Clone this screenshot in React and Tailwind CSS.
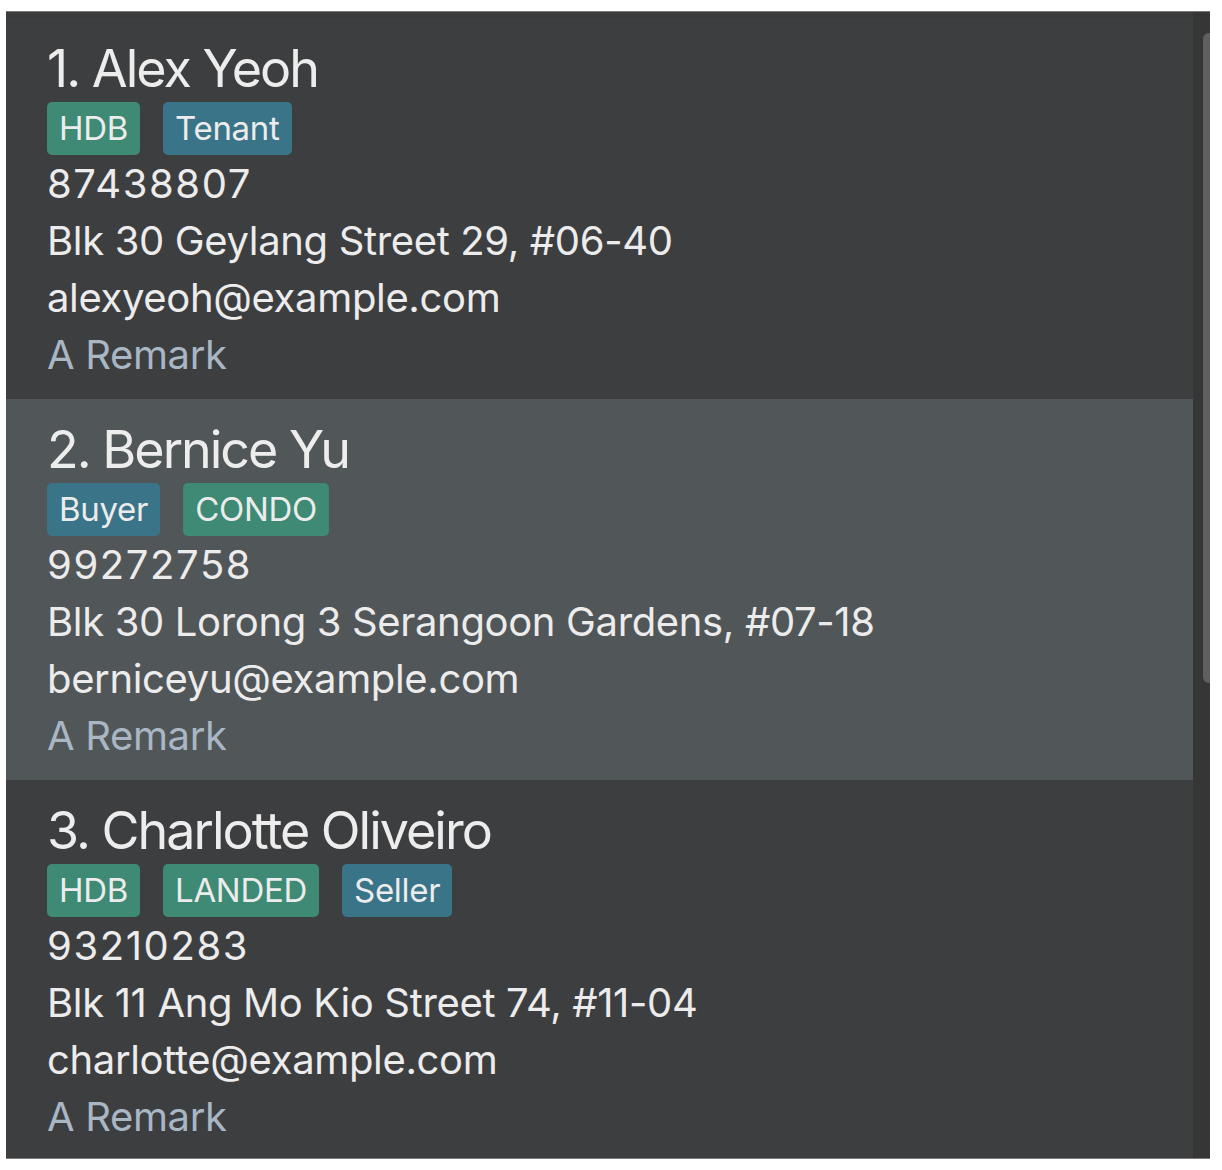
// Person list panel - dark theme

const persons = [
  {
    id: 1,
    name: 'Alex Yeoh',
    tags: [
      { label: 'HDB', kind: 'property' },
      { label: 'Tenant', kind: 'role' },
    ],
    phone: '87438807',
    address: 'Blk 30 Geylang Street 29, #06-40',
    email: 'alexyeoh@example.com',
    remark: 'A Remark',
  },
  {
    id: 2,
    name: 'Bernice Yu',
    tags: [
      { label: 'Buyer', kind: 'role' },
      { label: 'CONDO', kind: 'property' },
    ],
    phone: '99272758',
    address: 'Blk 30 Lorong 3 Serangoon Gardens, #07-18',
    email: 'berniceyu@example.com',
    remark: 'A Remark',
    selected: true,
  },
  {
    id: 3,
    name: 'Charlotte Oliveiro',
    tags: [
      { label: 'HDB', kind: 'property' },
      { label: 'LANDED', kind: 'property' },
      { label: 'Seller', kind: 'role' },
    ],
    phone: '93210283',
    address: 'Blk 11 Ang Mo Kio Street 74, #11-04',
    email: 'charlotte@example.com',
    remark: 'A Remark',
  },
];

function Tag({ label, kind }) {
  return (
    <span
      className={`h-[53px] px-[12px] rounded-[5px] flex items-center text-[33px] tracking-[-0.3px] leading-none text-[#ececec] ${
        kind === 'property' ? 'bg-[#3e8a74]' : 'bg-[#3a7489]'
      }`}
    >
      {label}
    </span>
  );
}

function PersonCard({ person, index }) {
  return (
    <div
      className={`h-[381px] shrink-0 pl-[41px] pt-[21px] ${
        person.selected ? 'bg-[#515659]' : 'bg-[#3d3e40]'
      }`}
    >
      <div className="text-[52px] leading-[60px] tracking-[-2px] text-[#ededed] whitespace-nowrap">
        {index}. {person.name}
      </div>
      <div className="mt-[3px] flex gap-[23px]">
        {person.tags.map(tag => (
          <Tag key={tag.label} {...tag} />
        ))}
      </div>
      <div className="text-[40px] leading-[57px] tracking-[-0.35px] text-[#ececec] whitespace-nowrap">
        <div className="tracking-[1.6px]">{person.phone}</div>
        <div>{person.address}</div>
        <div>{person.email}</div>
        <div className="text-[#a9b6c4]">{person.remark}</div>
      </div>
    </div>
  );
}

export default function App() {
  return (
    <div
      className="w-full h-[1170px] bg-white pt-[11px] pl-[6px]"
      style={{ fontFamily: 'Inter, "Noto Sans", sans-serif' }}
    >
      <div className="w-[1204px] h-[1148px] flex border-t border-b border-[#7c7c7c] overflow-hidden">
        <div className="flex-1 flex flex-col bg-[#3d3e40] overflow-hidden">
          <div className="h-[6px] shrink-0 bg-[#3a3b3d]"></div>
          {persons.map((p, i) => (
            <PersonCard key={p.id} person={p} index={i + 1} />
          ))}
        </div>
        <div className="w-[17px] bg-[#363636] flex justify-end pt-[21px]">
          <div className="w-[7px] h-[650px] bg-[#5f5f5f] rounded-l-[6px]"></div>
        </div>
      </div>
    </div>
  );
}
